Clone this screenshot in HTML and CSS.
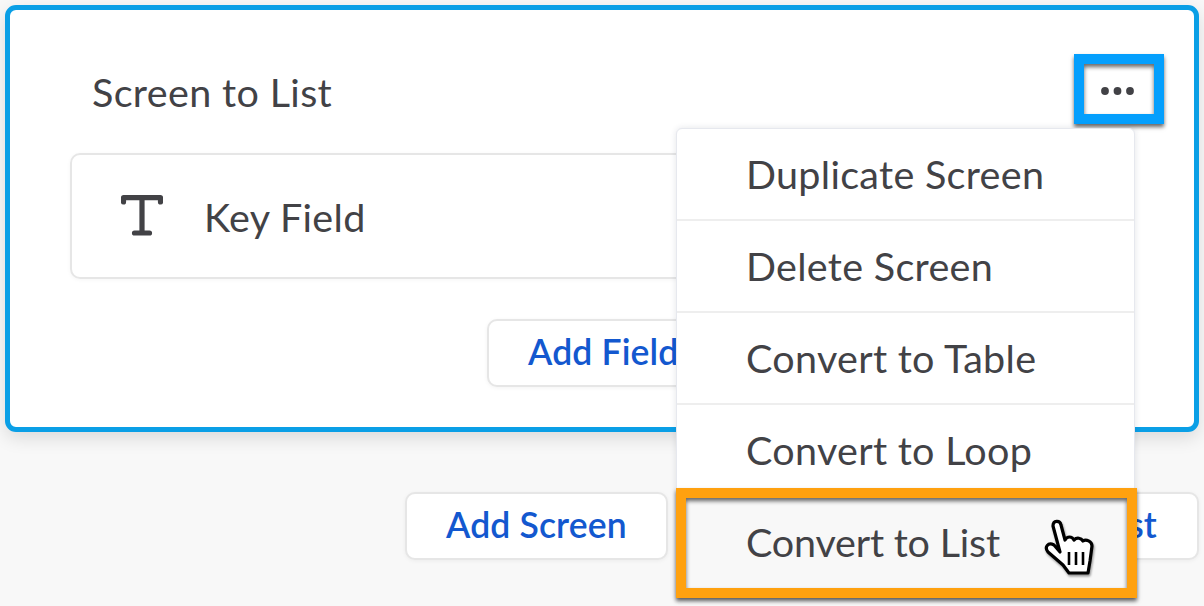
FILE: index.html
```html
<!DOCTYPE html>
<html lang="en">
<head>
<meta charset="utf-8">
<title>Screen to List</title>
<link rel="stylesheet" href="styles.css">
</head>
<body>
<div class="page">
  <section class="card">
    <header class="card-head">
      <h2 class="title">Screen to List</h2>
    </header>
    <div class="field">
      <svg class="field-icon" viewBox="0 0 42 42" aria-hidden="true"><path d="M2.5 7V2.7H39.5V7M21 3V38M13.5 38H28.5" fill="none" stroke="#424246" stroke-width="5.2" stroke-linecap="round" stroke-linejoin="round"/></svg>
      <span>Key Field</span>
    </div>
    <div class="field-actions">
      <button class="btn btn-field">Add Field</button>
    </div>
  </section>
  <div class="page-actions">
    <button class="btn btn-screen">Add Screen</button>
    <button class="btn btn-list">Add List</button>
  </div>

  <div class="more">
    <svg viewBox="0 0 33 8" class="dots" aria-hidden="true"><circle cx="4" cy="4" r="3.9"/><circle cx="16.5" cy="4" r="3.9"/><circle cx="29" cy="4" r="3.9"/></svg>
  </div>

  <ul class="menu">
    <li>Duplicate Screen</li>
    <li>Delete Screen</li>
    <li>Convert to Table</li>
    <li>Convert to Loop</li>
    <li class="active">Convert to List</li>
  </ul>

  <svg class="hand" viewBox="0 0 64 66" aria-hidden="true">
    <path d="M17 12C17 6 24 6 25 11L29 26C31 22 36 22 38 26C41 23 45 24 47 27C50 25 56 27 56 32L54 47L52 59L33 59L27 51L12 38C8 33 12 28 18 31L24 38Z" fill="#fff" stroke="#000" stroke-width="3.2" stroke-linejoin="round"/>
    <path d="M33 38V51M40 38V51M47 38V51" stroke="#000" stroke-width="2.6" fill="none"/>
  </svg>
</div>
</body>
</html>
```
FILE: styles.css
```css
* { box-sizing: border-box; }
html, body { margin: 0; padding: 0; }
body {
  background: #f8f8f8;
  color: #424246;
  font-family: Lato, "Open Sans", "Liberation Sans", sans-serif;
}
.page {
  position: relative;
  width: 1204px;
  height: 606px;
  overflow: hidden;
  padding: 5px 5px 0;
}
.card {
  height: 427px;
  background: #fff;
  border: 5px solid #0a9fe6;
  border-radius: 11px;
  box-shadow: 0 6px 18px rgba(0, 0, 0, .12);
  padding: 0 0 0 60px;
}
.card-head {
  height: 143px;
  padding: 57px 0 0 22px;
}
.title {
  margin: 0;
  font-size: 39.5px;
  line-height: 50px;
  letter-spacing: .35px;
  font-weight: 400;
}
.field {
  display: flex;
  align-items: center;
  width: 640px;
  height: 126px;
  border: 2px solid #e6e6e6;
  border-radius: 10px;
  padding: 0 0 0 49px;
  font-size: 39.5px;
  letter-spacing: .35px;
  box-shadow: 0 1px 4px rgba(0, 0, 0, .04);
}
.field-icon { width: 42px; height: 42px; margin-right: 41px; }
.field-actions {
  display: flex;
  padding: 40px 0 0 417px;
}
.btn {
  background: #fff;
  color: #1358cf;
  border: 2px solid #e6e6e6;
  border-radius: 10px;
  font-family: inherit;
  font-size: 35.5px;
  letter-spacing: .15px;
  font-weight: 600;
  height: 68px;
  padding: 0 0 4px 39px;
  text-align: left;
  box-shadow: 0 1px 4px rgba(0, 0, 0, .05);
}
.btn-field { width: 300px; }
.page-actions {
  display: flex;
  gap: 20px;
  padding: 60px 0 0 400px;
}
.btn-screen { width: 263px; }
.btn-list { width: 511px; padding: 0 40px 4px 0; text-align: right; }
.more {
  position: absolute;
  left: 1074px;
  top: 54px;
  width: 90px;
  height: 70px;
  border: 10px solid #049ffd;
  display: flex;
  align-items: center;
  justify-content: center;
  box-shadow: 0 3px 4px rgba(0, 0, 0, .6), inset 0 3px 4px rgba(0, 0, 0, .6);
}
.dots { width: 33px; height: 8px; fill: #424246; margin: 4px 4px 0 0; }
.menu {
  position: absolute;
  left: 676px;
  top: 128px;
  width: 459px;
  margin: 0;
  padding: 0;
  list-style: none;
  background: #fff;
  border: 1px solid #e6e8ee;
  border-radius: 6px 6px 0 0;
  box-shadow: 0 0 6px rgba(30, 40, 70, .12);
  font-size: 39.5px;
  letter-spacing: .3px;
}
.menu li {
  height: 92px;
  line-height: 90px;
  padding-left: 69px;
  border-bottom: 2px solid #eeeeee;
}
.menu li.active {
  position: relative;
  height: 110px;
  line-height: 88px;
  width: 461px;
  margin: -9px 0 0 -1px;
  padding-left: 60px;
  letter-spacing: -.2px;
  background: #f8f8f8;
  border: 10px solid #ffa10f;
  box-shadow: 0 3px 4px rgba(0, 0, 0, .6), inset 0 3px 4px rgba(0, 0, 0, .6);
}
.hand {
  position: absolute;
  left: 1036px;
  top: 514px;
  width: 64px;
  height: 66px;
  filter: drop-shadow(1px 2px 1px rgba(0, 0, 0, .4));
}
```
